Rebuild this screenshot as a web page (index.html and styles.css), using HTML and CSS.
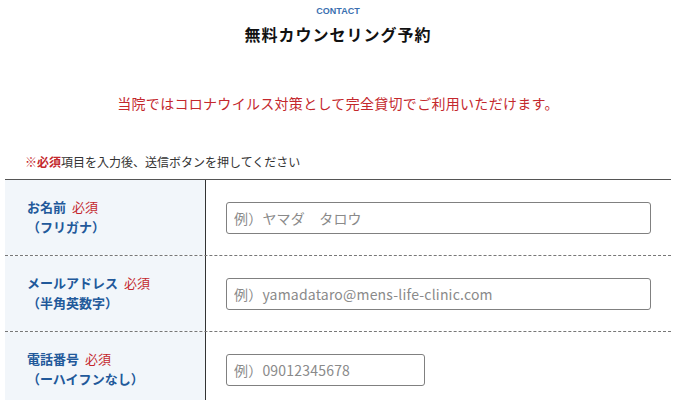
FILE: index.html
```html
<!DOCTYPE html>
<html lang="ja">
<head>
<meta charset="utf-8">
<link rel="stylesheet" href="styles.css">
</head>
<body>
<div class="page">
  <p class="eyebrow">CONTACT</p>
  <h1 class="title">無料カウンセリング予約</h1>
  <p class="notice">当院ではコロナウイルス対策として完全貸切でご利用いただけます。</p>
  <p class="note"><span class="red">※</span><strong class="red">必須</strong>項目を入力後、送信ボタンを押してください</p>
  <div class="form">
    <div class="row">
      <div class="label"><div class="line">お名前<span class="req">必須</span></div><div class="line">（フリガナ）</div></div>
      <div class="field"><input class="input" type="text" placeholder="例）ヤマダ　タロウ"></div>
    </div>
    <div class="row">
      <div class="label"><div class="line">メールアドレス<span class="req">必須</span></div><div class="line">（半角英数字）</div></div>
      <div class="field"><input class="input" type="text" placeholder="例）yamadataro@mens-life-clinic.com"></div>
    </div>
    <div class="row">
      <div class="label"><div class="line">電話番号<span class="req">必須</span></div><div class="line">（ーハイフンなし）</div></div>
      <div class="field"><input class="input short" type="text" placeholder="例）09012345678"></div>
    </div>
  </div>
</div>
</body>
</html>
```
FILE: styles.css
```css
* { box-sizing: border-box; }
html, body { margin: 0; padding: 0; background: #fff; }
body {
  font-family: "Noto Sans CJK JP", "Noto Sans", sans-serif;
  color: #333;
}
.page { padding: 0 9px 0 5px; }
.eyebrow {
  margin: 5px 0 0;
  font-family: "Liberation Sans", Arial, sans-serif;
  font-size: 9px;
  line-height: 12px;
  font-weight: bold;
  color: #3a6fb0;
  text-align: center;
}
.title {
  margin: 5px 0 0;
  font-size: 16px;
  line-height: 24px;
  font-weight: bold;
  letter-spacing: 1px;
  color: #111;
  text-align: center;
}
.notice {
  margin: 47px 0 0;
  font-size: 14px;
  line-height: 20px;
  letter-spacing: 0.3px;
  color: #c4282d;
  text-align: center;
}
.note {
  margin: 40px 0 0;
  padding-left: 20px;
  font-size: 12px;
  line-height: 18px;
  color: #333;
}
.red { color: #c4282d; }
.form {
  margin-top: 8px;
  border-top: 1px solid #555;
}
.row {
  display: grid;
  grid-template-columns: 201px 1fr;
  height: 76px;
  border-bottom: 1px dashed #777;
}
.label {
  background: #f2f6fa;
  border-right: 1px solid #333;
  padding: 0 0 2px 22px;
  display: flex;
  flex-direction: column;
  justify-content: center;
  font-size: 13px;
  line-height: 20px;
  font-weight: bold;
  color: #22599a;
}
.req {
  color: #c4282d;
  font-weight: normal;
  margin-left: 6px;
}
.field {
  display: flex;
  align-items: center;
  padding: 0 20px;
}
.input {
  width: 100%;
  height: 32px;
  border: 1px solid #808080;
  border-radius: 3px;
  padding: 0 7px;
  font-family: "Noto Sans CJK JP", "Noto Sans", sans-serif;
  font-size: 14px;
  letter-spacing: 0.2px;
  color: #333;
  background: #fff;
  outline: none;
}
.input::placeholder { color: #8a8a8a; }
.input.short { width: 199px; }
```
